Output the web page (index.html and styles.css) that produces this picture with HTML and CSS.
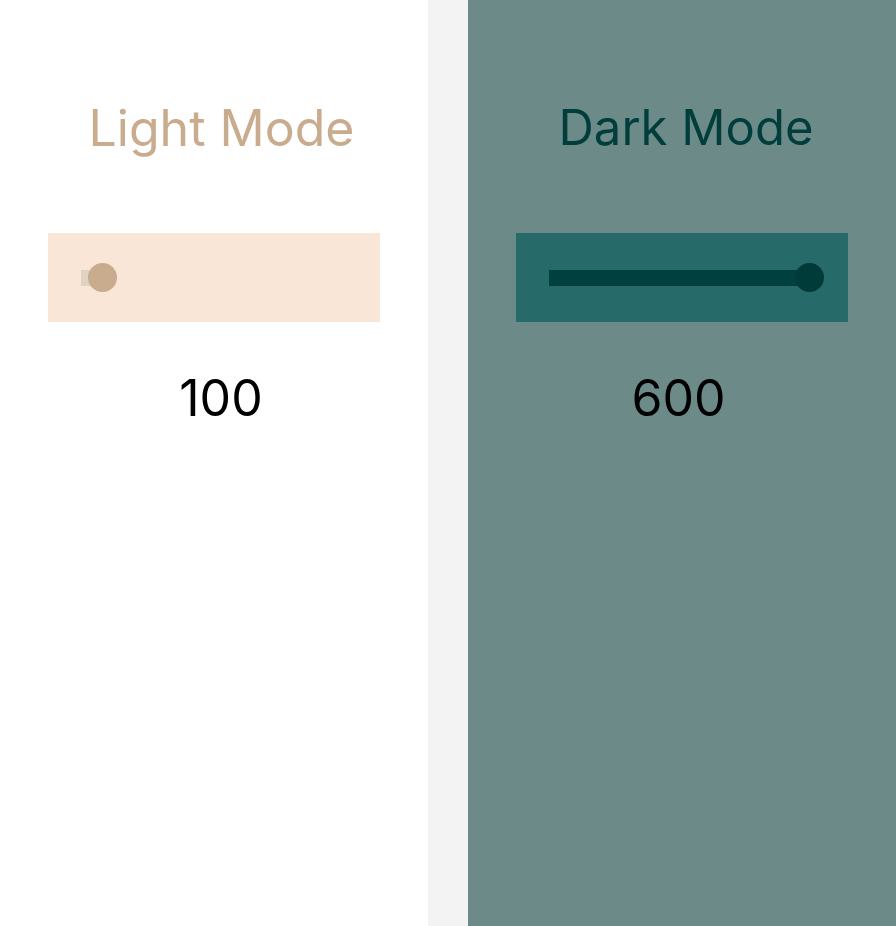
FILE: index.html
```html
<!DOCTYPE html>
<html>
<head>
<meta charset="utf-8">
<link rel="stylesheet" href="styles.css">
</head>
<body>
<div class="page">
  <section class="panel light">
    <h2 class="title">Light Mode</h2>
    <div class="box">
      <div class="track">
        <div class="fill" style="width: 14px"></div>
        <div class="thumb" style="left: 7px"></div>
      </div>
    </div>
    <div class="value">100</div>
  </section>
  <div class="divider"></div>
  <section class="panel dark">
    <h2 class="title">Dark Mode</h2>
    <div class="box">
      <div class="track">
        <div class="fill" style="width: 250px"></div>
        <div class="thumb" style="left: 246px"></div>
      </div>
    </div>
    <div class="value">600</div>
  </section>
</div>
</body>
</html>
```

FILE: styles.css
```css
* { box-sizing: border-box; }
html, body { margin: 0; padding: 0; }
body {
  font-family: Inter, "Noto Sans", sans-serif;
  background: #f3f3f3;
}
.page {
  display: flex;
  width: 896px;
  height: 926px;
  overflow: hidden;
}
.panel {
  width: 428px;
  flex: none;
  padding: 0 48px;
  display: flex;
  flex-direction: column;
}
.divider {
  width: 40px;
  flex: none;
  background: #f3f3f3;
}
.light { background: #ffffff; }
.dark { background: #6b8a88; }
.title {
  margin: 98px 0 0;
  font-size: 50px;
  font-weight: 400;
  line-height: 60px;
  text-align: center;
}
.light .title { color: #c9ab8d; padding-left: 15px; }
.dark .title { color: #003d3b; padding-left: 8px; font-size: 49px; }
.box {
  margin-top: 75px;
  height: 89px;
  padding: 0 33px;
  display: flex;
  align-items: center;
}
.light .box { background: #fae6d6; }
.dark .box { background: #266b69; }
.track {
  position: relative;
  width: 100%;
  height: 16px;
}
.fill { height: 100%; }
.light .fill { background: #dfd3c4; }
.dark .fill { background: #004140; }
.thumb {
  position: absolute;
  top: -7px;
  width: 29px;
  height: 29px;
  border-radius: 50%;
}
.light .thumb { background: #c9ab8d; }
.dark .thumb { background: #003a39; }
.value {
  margin-top: 46px;
  font-size: 50px;
  line-height: 60px;
  text-align: center;
  color: #000;
}
.light .value { padding-left: 14px; }
.dark .value { padding-right: 7px; }
```
